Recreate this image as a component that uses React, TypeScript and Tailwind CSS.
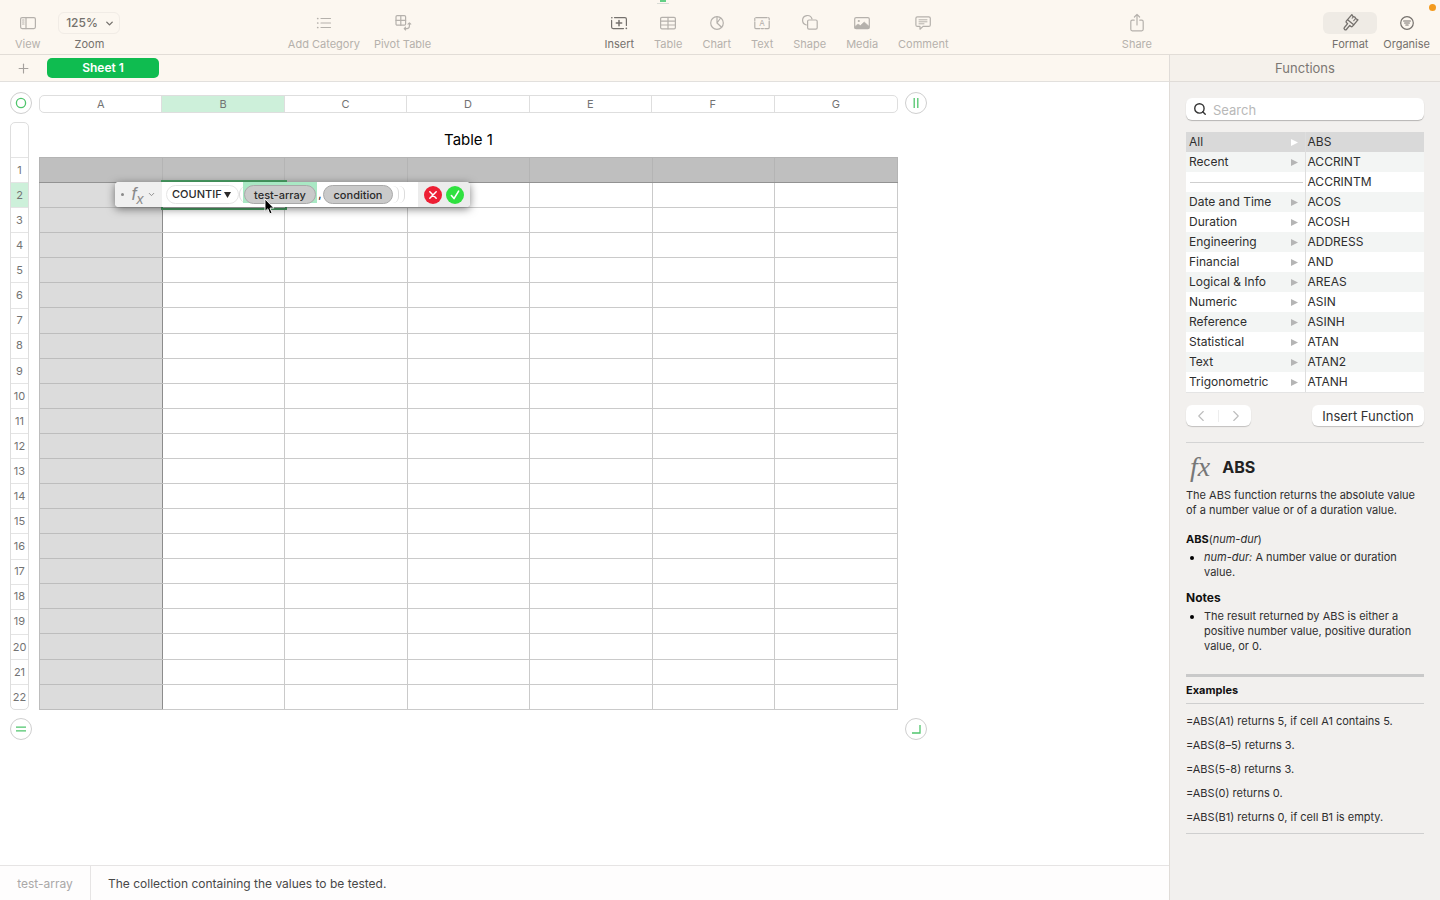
import type { ReactNode } from 'react'
import clsx from 'clsx'
import { ChevronDown, ChevronLeft, ChevronRight, Plus, Search } from 'lucide-react'

const columns = ['A', 'B', 'C', 'D', 'E', 'F', 'G']
const rows = Array.from({ length: 22 }, (_, i) => i + 1)

const categories = [
  'All',
  'Recent',
  '',
  'Date and Time',
  'Duration',
  'Engineering',
  'Financial',
  'Logical & Info',
  'Numeric',
  'Reference',
  'Statistical',
  'Text',
  'Trigonometric',
]

const functions = [
  'ABS',
  'ACCRINT',
  'ACCRINTM',
  'ACOS',
  'ACOSH',
  'ADDRESS',
  'AND',
  'AREAS',
  'ASIN',
  'ASINH',
  'ATAN',
  'ATAN2',
  'ATANH',
]

const examples = [
  '=ABS(A1) returns 5, if cell A1 contains 5.',
  '=ABS(8–5) returns 3.',
  '=ABS(5-8) returns 3.',
  '=ABS(0) returns 0.',
  '=ABS(B1) returns 0, if cell B1 is empty.',
]

function Icon({ children }: { children: ReactNode }) {
  return (
    <svg
      width="20"
      height="20"
      viewBox="0 0 20 20"
      fill="none"
      stroke="currentColor"
      strokeWidth="1.2"
      strokeLinecap="round"
      strokeLinejoin="round"
      aria-hidden="true"
    >
      {children}
    </svg>
  )
}

const icons = {
  view: (
    <Icon>
      <rect x="2.6" y="4.6" width="14.8" height="11" rx="1.5" />
      <path d="M8 4.6v11M4.6 7h1.4M4.6 9h1.4M4.6 11h1.4" />
    </Icon>
  ),
  category: (
    <Icon>
      <path d="M7 5.5h9.5M7 10h9.5M7 14.5h9.5" />
      <path d="M3.7 5.5h.1M3.7 10h.1M3.7 14.5h.1" strokeWidth="1.7" />
    </Icon>
  ),
  pivot: (
    <Icon>
      <rect x="3" y="2.6" width="9.6" height="9.6" rx="1.2" />
      <path d="M7.8 2.6v9.6M3 7.4h9.6" />
      <path d="M16.4 10v3q0 2.6-2.6 2.6h-2.6M15 11.2l1.4-1.4 1.4 1.4M12.6 14.2l-1.4 1.4 1.4 1.4" strokeWidth="1.1" />
    </Icon>
  ),
  insert: (
    <Icon>
      <path d="M5.5 4.6h10.4q1.5 0 1.5 1.5v6.4M14.5 15.6H4.1q-1.5 0-1.5-1.5V7.4" />
      <path d="M10 7.4v5.4M7.3 10.1h5.4" strokeWidth="1.5" />
      <path d="M2.8 4.8h.1M17.3 15.4h.1" strokeWidth="1.6" />
    </Icon>
  ),
  table: (
    <Icon>
      <rect x="2.6" y="4.4" width="14.8" height="11.4" rx="1.3" />
      <path d="M2.6 8.2h14.8M2.6 12h14.8M10 4.4v11.4" />
    </Icon>
  ),
  chart: (
    <Icon>
      <circle cx="10" cy="10" r="6.3" />
      <path d="M10 3.7V10l4.6 4.3M10 10l3.6-5" />
    </Icon>
  ),
  text: (
    <Icon>
      <rect x="2.8" y="4.6" width="14.4" height="11" rx="1" strokeDasharray="11.4 1.4 2 1.4" />
      <text x="10" y="13" textAnchor="middle" fontSize="8" fontFamily="Inter" fill="currentColor" stroke="none">
        A
      </text>
    </Icon>
  ),
  shape: (
    <Icon>
      <path d="M6.4 12A4.8 4.8 0 1 1 12 6" />
      <rect x="7.6" y="7" width="9.6" height="9.2" rx="1.4" />
    </Icon>
  ),
  media: (
    <Icon>
      <rect x="2.7" y="4.6" width="14.6" height="11" rx="1.4" />
      <circle cx="6.8" cy="8" r="1.1" fill="currentColor" stroke="none" />
      <path d="M3 13.4l3-2.4 2.4 1.6 3.8-3.6 4.8 4.2v2H3z" fill="currentColor" strokeWidth="0.6" />
    </Icon>
  ),
  comment: (
    <Icon>
      <path d="M4.4 3.8h11.4q1.5 0 1.5 1.5v6.6q0 1.5-1.5 1.5H10l-3 2.8v-2.8H4.4q-1.5 0-1.5-1.5V5.3q0-1.5 1.5-1.5z" />
      <path d="M6 6.8h8M6 8.8h8M6 10.8h5" strokeWidth="1" />
    </Icon>
  ),
  share: (
    <Icon>
      <path d="M7.2 7.2H5.3Q3.8 7.2 3.8 8.7v7.6q0 1.5 1.5 1.5h9.4q1.5 0 1.5-1.5V8.7q0-1.5-1.5-1.5h-1.9" />
      <path d="M10 12V1.6M7.4 4L10 1.4 12.6 4" />
    </Icon>
  ),
  format: (
    <Icon>
      <g transform="rotate(40 10 10)" strokeWidth="1.3">
        <path d="M6 9V2.4l2 .6 2-.6 2 .6 2-.6V9z" />
        <path d="M8.6 3v2M11.4 3v3" strokeWidth="1" />
        <path d="M6 9v2q0 1 1 1h1.6v5q0 1.4 1.4 1.4t1.4-1.4v-5H13q1 0 1-1V9" />
      </g>
    </Icon>
  ),
  organise: (
    <Icon>
      <circle cx="10" cy="10" r="6.3" />
      <path d="M6.6 8h6.8M7.6 10h4.8M8.8 12h2.4" strokeWidth="1.1" />
    </Icon>
  ),
}

function Tool({ icon, label, active }: { icon: ReactNode; label: string; active?: boolean }) {
  return (
    <button
      type="button"
      className={clsx(
        'flex flex-col items-center gap-0.5 text-[11px] leading-4',
        active ? 'text-[#75716d]' : 'text-[#b5b1ac]',
      )}
    >
      <span className="flex h-[22px] items-center">{icon}</span>
      {label}
    </button>
  )
}

function Toolbar() {
  return (
    <header className="relative flex h-[55px] items-start justify-between border-b border-[#e2ddd7] bg-[#fcf7f0] pt-3 pr-[10px] pl-[15px]">
      <div className="flex gap-[18px]">
        <Tool icon={icons.view} label="View" />
        <div className="flex w-[62px] flex-col items-center gap-0.5 text-[11px] leading-4 text-[#75716d]">
          <button
            type="button"
            aria-labelledby="zoom-label"
            className="flex h-[22px] w-full items-center justify-center gap-1.5 rounded-md border border-[#f1ece6] pl-0.5 text-xs font-medium"
          >
            125%
            <ChevronDown size={11} strokeWidth={3} />
          </button>
          <span id="zoom-label">Zoom</span>
        </div>
      </div>

      <div className="mr-1 -ml-1 flex gap-[14px]">
        <Tool icon={icons.category} label="Add Category" />
        <Tool icon={icons.pivot} label="Pivot Table" />
      </div>

      <div className="mr-0.5 -ml-0.5 flex gap-5">
        <Tool icon={icons.insert} label="Insert" active />
        <Tool icon={icons.table} label="Table" />
        <Tool icon={icons.chart} label="Chart" />
        <Tool icon={icons.text} label="Text" />
        <Tool icon={icons.shape} label="Shape" />
        <Tool icon={icons.media} label="Media" />
        <Tool icon={icons.comment} label="Comment" />
      </div>

      <Tool icon={icons.share} label="Share" />

      <div className="flex gap-1.5">
        <button type="button" className="flex flex-col items-center gap-0.5 text-[11px] leading-4 text-[#75716d]">
          <span className="flex h-[22px] w-[54px] items-center justify-center rounded-md bg-[#efebe5]">
            {icons.format}
          </span>
          Format
        </button>
        <Tool icon={icons.organise} label="Organise" active />
      </div>

      {/* Document proxy and recording dot */}
      <span className="absolute top-0 left-[657px] h-1 w-3 border-b border-[#d9dcd6] px-[3px]">
        <span className="block h-0.5 bg-[#63cf85]" />
      </span>
      <span className="absolute top-1 right-1 size-[7px] rounded-full bg-[#f39a1d]" />
    </header>
  )
}

function Handle({ label, children }: { label: string; children: ReactNode }) {
  return (
    <button
      type="button"
      aria-label={label}
      className="flex size-[22px] items-center justify-center rounded-full border border-[#cfcfcf] bg-white"
    >
      <svg width="12" height="12" viewBox="0 0 12 12" fill="none" stroke="#4fc56c" strokeWidth="1.3">
        {children}
      </svg>
    </button>
  )
}

function FormulaEditor() {
  return (
    <div className="absolute top-[25px] left-[76px] flex h-[25px] w-[355px] rounded-[4px] bg-white text-[11px] font-medium text-[#2a2a2a] shadow-[0_2px_8px_rgba(0,0,0,0.5)]">
      <div className="flex w-[47px] items-center justify-between rounded-l-[4px] bg-[#f0f0f0] px-1.5 text-[#8a8a8a]">
        <span className="size-[3px] rounded-full bg-[#8a8a8a]" />
        <span className="pl-1 font-['Liberation_Sans'] text-lg leading-5 font-normal italic">
          f<sub className="text-sm">x</sub>
        </span>
        <ChevronDown size={9} strokeWidth={2.5} />
      </div>
      <div className="flex flex-1 items-center pl-1">
        <button
          type="button"
          className="flex h-[19px] w-[73px] items-center gap-0.5 rounded-full border border-[#e6e6e6] pl-[5px]"
        >
          COUNTIF
          <svg width="7" height="6" viewBox="0 0 7 6" fill="currentColor">
            <path d="M0 0h7L3.5 6z" />
          </svg>
        </button>
        <span className="-mr-1 h-[17px] w-2 rounded-l-full border-l border-[#dcdcdc]" />
        <span className="flex h-full items-start bg-[linear-gradient(#a9e8c4_21px,transparent_21px)] px-px pt-[3px]">
          <button type="button" className="h-[19px] w-[72px] rounded-full border border-[#a9a9a9] bg-[#cacaca] leading-4">
            test-array
          </button>
        </span>
        <span className="w-[6px] text-center">,</span>
        <button type="button" className="h-[19px] w-[70px] rounded-full border border-[#a9a9a9] bg-[#cacaca] leading-4">
          condition
        </button>
        <span className="h-[17px] w-[6px] rounded-r-full border-r border-[#dcdcdc]" />
        <span className="h-[17px] w-[6px] rounded-r-full border-r border-[#dcdcdc]" />
      </div>
      <div className="flex w-[52px] items-center justify-center gap-1 rounded-r-[4px] bg-[#ececec]">
        <button type="button" aria-label="Cancel">
          <svg width="18" height="18" viewBox="0 0 18 18">
            <circle cx="9" cy="9" r="9" fill="#ed1f34" />
            <path d="M5.8 5.8l6.4 6.4M12.2 5.8l-6.4 6.4" stroke="#fff" strokeWidth="1.5" strokeLinecap="round" />
          </svg>
        </button>
        <button type="button" aria-label="Accept">
          <svg width="18" height="18" viewBox="0 0 18 18" fill="none">
            <circle cx="9" cy="9" r="9" fill="#2fe13f" />
            <path d="M5.4 9.6l2.6 3 4.6-7.4" stroke="#fff" strokeWidth="1.6" strokeLinecap="round" strokeLinejoin="round" />
          </svg>
        </button>
      </div>

      {/* Pointer */}
      <svg className="absolute top-4 left-[149px]" width="11" height="18" viewBox="0 0 11 18">
        <path
          d="M1 1v12.4l2.8-2.6 2 5 2.2-.9-2-4.8h3.8z"
          fill="#000"
          stroke="#fff"
          strokeWidth="0.9"
        />
      </svg>
    </div>
  )
}

function Sheet() {
  return (
    <main className="flex-1 overflow-hidden bg-white pt-[10px] pl-[10px]">
      <div className="grid grid-cols-[22px_859px_22px] gap-x-[7px] gap-y-2 text-[11px] text-[#737373]">
        <Handle label="Select table">
          <circle cx="6" cy="6" r="4.6" />
        </Handle>
        <div className="mt-[3px] grid h-[18px] grid-cols-7 overflow-hidden rounded-[5px] border border-[#dedede]">
          {columns.map((c) => (
            <div
              key={c}
              className={clsx(
                'flex items-center justify-center border-r border-[#dedede] last:border-r-0',
                c === 'B' && 'bg-[#cdf0da]',
              )}
            >
              {c}
            </div>
          ))}
        </div>
        <Handle label="Add column">
          <path d="M4.2 1v10M7.8 1v10" />
        </Handle>

        <div className="flex w-[19px] flex-col overflow-hidden rounded-[5px] border border-[#dedede]">
          <div className="h-[34px]" />
          {rows.map((r) => (
            <div
              key={r}
              className={clsx(
                'flex flex-1 items-center justify-center border-t border-[#e4e4e4]',
                r === 2 && 'bg-[#cdf0da]',
              )}
            >
              {r}
            </div>
          ))}
        </div>
        <div>
          <h1 className="h-[35px] text-center text-[15px] leading-9 text-black">Table 1</h1>
          <div className="relative">
            <table aria-label="Table 1" className="h-[553px] w-full table-fixed border-collapse">
              <tbody>
                {rows.map((r) => (
                  <tr key={r}>
                    {columns.map((c) => (
                      <td
                        key={c}
                        className={clsx(
                          'border p-0',
                          r === 1
                            ? 'border-[#b4b4b4] border-b-[#929292] bg-[#bfbfbf]'
                            : c === 'A'
                              ? 'border-[#bdbdbd] border-r-[#8c8c8c] bg-[#dcdcdc]'
                              : 'border-[#cacaca]',
                        )}
                      />
                    ))}
                  </tr>
                ))}
              </tbody>
            </table>
            <div className="absolute top-[23px] left-[122px] h-[30px] w-[126px] border-2 border-[#4ba367]" />
            <FormulaEditor />
          </div>
        </div>
        <div />

        <Handle label="Add row">
          <path d="M1 4.2h10M1 7.8h10" />
        </Handle>
        <div />
        <Handle label="Add row and column">
          <path d="M2 10h8V2" />
        </Handle>
      </div>
    </main>
  )
}

function FunctionBrowser() {
  return (
    <aside className="w-[271px] shrink-0 border-l border-[#e0dcd8] bg-[#f2f0ee]">
      <h2 className="h-[27px] border-b border-[#e0dcd8] bg-[#f5f1eb] text-center text-[13px] leading-[26px] text-[#7b7773]">
        Functions
      </h2>
      <div className="px-4 pt-4">
        <label className="flex h-[22px] items-center gap-1.5 rounded-md bg-white pl-[7px] text-[#333] shadow-[0_1px_1px_rgba(0,0,0,0.25)]">
          <Search size={14} strokeWidth={2.4} />
          <input
            type="search"
            aria-label="Search functions"
            placeholder="Search"
            className="h-full min-w-0 flex-1 pt-px text-[13px] outline-none placeholder:text-[#b8b8b8]"
          />
        </label>

        <div className="mt-3 flex border-b border-[#e4e4e4] text-xs leading-5 text-[#2e2e2e]">
          <ul className="flex-1 border-r border-[#dedede]">
            {categories.map((c, i) => (
              <li key={i} className="h-5 bg-white first:bg-[#d9d9d9] even:bg-[#f3f5f4]">
                {c ? (
                  <button type="button" className="flex w-full items-center justify-between pr-[7px] pl-[3px]">
                    {c}
                    <svg
                      width="7"
                      height="7"
                      viewBox="0 0 7 7"
                      className={i === 0 ? 'text-white' : 'text-[#b5b5b5]'}
                      fill="currentColor"
                    >
                      <path d="M0 0l7 3.5L0 7z" />
                    </svg>
                  </button>
                ) : (
                  <div className="pt-[10px] pr-0.5 pl-1">
                    <hr className="border-[#cfcfcf]" />
                  </div>
                )}
              </li>
            ))}
          </ul>
          <ul className="flex-1">
            {functions.map((f) => (
              <li key={f} className="h-5 bg-white first:bg-[#d9d9d9] even:bg-[#f3f5f4]">
                <button type="button" className="w-full pl-0.5 text-left">
                  {f}
                </button>
              </li>
            ))}
          </ul>
        </div>

        <div className="mt-3 flex justify-between">
          <div className="flex h-[21px] w-[65px] items-center justify-center gap-2 rounded-md bg-white text-[#bdbdbd] shadow-[0_1px_1px_rgba(0,0,0,0.2)]">
            <button type="button" aria-label="Back">
              <ChevronLeft size={18} strokeWidth={1.5} />
            </button>
            <span className="h-3 w-px bg-[#ededed]" />
            <button type="button" aria-label="Forward">
              <ChevronRight size={18} strokeWidth={1.5} />
            </button>
          </div>
          <button
            type="button"
            className="flex h-[21px] w-28 items-center justify-center rounded-md bg-white text-[13px] leading-4 text-[#333] shadow-[0_1px_1px_rgba(0,0,0,0.2)]"
          >
            Insert Function
          </button>
        </div>

        <article className="mt-4 border-t border-[#d4d4d4] pt-2 text-[11px] leading-[15px] text-[#2e2e2e]">
          <h3 className="flex h-8 items-center gap-3 text-base font-bold text-[#222]">
            <span className="pl-1 font-['Liberation_Serif'] text-[28px] leading-7 font-normal text-[#777] italic">
              fx
            </span>
            ABS
          </h3>
          <p className="mt-[5px]">The ABS function returns the absolute value of a number value or of a duration value.</p>
          <p className="mt-[14px]">
            <b className="text-[#111]">ABS</b>(<i>num-dur</i>)
          </p>
          <ul className="mt-[3px] list-disc pl-[18px] marker:text-black">
            <li>
              <i>num-dur:</i> A number value or duration value.
            </li>
          </ul>
          <h4 className="mt-[10px] text-xs leading-[15px] font-bold text-[#111]">Notes</h4>
          <ul className="mt-1 list-disc pl-[18px] marker:text-black">
            <li>The result returned by ABS is either a positive number value, positive duration value, or 0.</li>
          </ul>
          <h4 className="mt-5 border-t-[3px] border-b border-t-[#c9c9c9] border-b-[#cfcfcf] pt-1.5 pb-[5px] text-[11px] font-bold text-[#111]">
            Examples
          </h4>
          <div className="flex flex-col gap-[9px] border-b border-[#cfcfcf] pt-[10px] pb-2">
            {examples.map((e) => (
              <p key={e}>{e}</p>
            ))}
          </div>
        </article>
      </div>
    </aside>
  )
}

export default function App() {
  return (
    <div className="flex min-h-screen flex-col font-['Inter',sans-serif]">
      <Toolbar />
      <div className="flex flex-1">
        <div className="flex min-w-0 flex-1 flex-col">
          <nav className="flex h-[27px] items-center border-b border-[#e2e0dd] bg-[#fcf7f0]">
            <button type="button" aria-label="Add sheet" className="flex w-[47px] justify-center text-[#a5a19d]">
              <Plus size={15} strokeWidth={1.8} />
            </button>
            <button
              type="button"
              className="h-5 w-28 rounded-[5px] bg-[#0fbc50] text-xs font-semibold text-white"
            >
              Sheet 1
            </button>
          </nav>
          <Sheet />
          <footer className="flex h-[35px] border-t border-[#e6e4e4] bg-[#fefdfd] text-xs leading-[35px] text-[#484848]">
            <span className="w-[91px] border-r border-[#e6e4e4] text-center text-[#aaa8a8]">test-array</span>
            <span className="pl-[17px]">The collection containing the values to be tested.</span>
          </footer>
        </div>
        <FunctionBrowser />
      </div>
    </div>
  )
}
